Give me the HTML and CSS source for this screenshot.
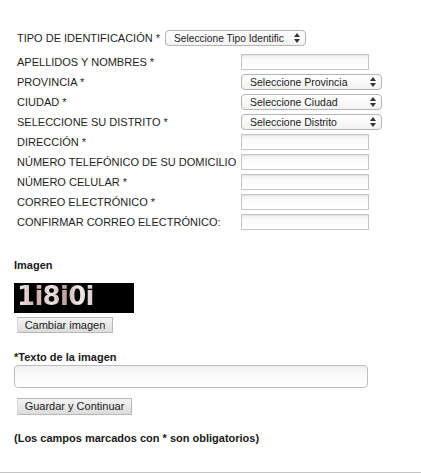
FILE: index.html
```html
<!DOCTYPE html>
<html lang="es">
<head>
<meta charset="utf-8">
<title>Formulario</title>
<link rel="stylesheet" href="styles.css">
</head>
<body>
<form class="page">
  <div class="fields">
    <div class="row row-first">
      <span class="label">TIPO DE IDENTIFICACIÓN *</span>
      <span class="select select-narrow"><span class="select-text">Seleccione Tipo Identific</span><svg class="arrows" width="6" height="10" viewBox="0 0 6 10"><path d="M0 4 L3 0 L6 4 Z M0 6 L3 10 L6 6 Z" fill="#333"/></svg></span>
    </div>
    <div class="row"><span class="label">APELLIDOS Y NOMBRES *</span><span class="input"></span></div>
    <div class="row"><span class="label">PROVINCIA *</span><span class="select"><span class="select-text">Seleccione Provincia</span><svg class="arrows" width="6" height="10" viewBox="0 0 6 10"><path d="M0 4 L3 0 L6 4 Z M0 6 L3 10 L6 6 Z" fill="#333"/></svg></span></div>
    <div class="row"><span class="label">CIUDAD *</span><span class="select"><span class="select-text">Seleccione Ciudad</span><svg class="arrows" width="6" height="10" viewBox="0 0 6 10"><path d="M0 4 L3 0 L6 4 Z M0 6 L3 10 L6 6 Z" fill="#333"/></svg></span></div>
    <div class="row"><span class="label">SELECCIONE SU DISTRITO *</span><span class="select"><span class="select-text">Seleccione Distrito</span><svg class="arrows" width="6" height="10" viewBox="0 0 6 10"><path d="M0 4 L3 0 L6 4 Z M0 6 L3 10 L6 6 Z" fill="#333"/></svg></span></div>
    <div class="row"><span class="label">DIRECCIÓN *</span><span class="input"></span></div>
    <div class="row"><span class="label">NÚMERO TELEFÓNICO DE SU DOMICILIO</span><span class="input"></span></div>
    <div class="row"><span class="label">NÚMERO CELULAR *</span><span class="input"></span></div>
    <div class="row"><span class="label">CORREO ELECTRÓNICO *</span><span class="input"></span></div>
    <div class="row"><span class="label">CONFIRMAR CORREO ELECTRÓNICO:</span><span class="input"></span></div>
  </div>

  <div class="lower">
    <div class="title title-imagen">Imagen</div>
    <div class="captcha"><span class="captcha-text">1i8i0i</span></div>
    <span class="btn btn-cambiar">Cambiar imagen</span>
    <div class="title title-texto">*Texto de la imagen</div>
    <div class="text-box"></div>
    <span class="btn btn-guardar">Guardar y Continuar</span>
    <div class="title note">(Los campos marcados con * son obligatorios)</div>
  </div>
  <div class="rule"></div>
</form>
</body>
</html>
```

FILE: styles.css
```css
html, body {
  margin: 0;
  padding: 0;
  background: #fff;
}

body {
  font-family: "Liberation Sans", Arial, Helvetica, sans-serif;
  font-size: 11px;
  color: #1e1e1e;
}

.page {
  display: flex;
  flex-direction: column;
  padding-top: 28px;
}

.fields {
  display: flex;
  flex-direction: column;
  padding-left: 17px;
}

.row {
  display: grid;
  grid-template-columns: 224px auto;
  align-items: center;
  height: 20px;
}

.row-first {
  display: flex;
  align-items: center;
  gap: 5px;
  margin-bottom: 4px;
}

.label {
  white-space: nowrap;
  line-height: 13px;
}

.input {
  display: block;
  box-sizing: border-box;
  width: 128px;
  height: 16px;
  border: 1px solid #c6c6c6;
  background: linear-gradient(#f1f1f1, #fbfbfb 40%, #fff);
  box-shadow: inset 0 1px 1px rgba(0, 0, 0, 0.06);
}

.select {
  position: relative;
  display: flex;
  align-items: center;
  box-sizing: border-box;
  width: 141px;
  height: 16px;
  border: 1px solid #b4b4b4;
  border-radius: 4px;
  background: linear-gradient(#ffffff, #f3f3f3);
  padding-left: 8px;
}

.select-narrow {
  padding-left: 8px;
}

.select-text {
  white-space: nowrap;
  font-size: 10.5px;
  line-height: 13px;
  color: #1a1a1a;
}

.select-narrow .select-text {
  font-size: 10.2px;
}

.arrows {
  position: absolute;
  right: 5px;
  top: 2px;
}

.lower {
  display: flex;
  flex-direction: column;
  align-items: flex-start;
  padding-left: 14px;
}

.title {
  font-weight: bold;
  line-height: 13px;
  color: #1a1a1a;
}

.title-imagen {
  margin-top: 27px;
}

.captcha {
  margin-top: 11px;
  width: 120px;
  height: 30px;
  background: #000;
  display: flex;
  align-items: center;
  padding-left: 3px;
  box-sizing: border-box;
}

.captcha-text {
  font-family: "DejaVu Sans", "Liberation Sans", sans-serif;
  font-weight: bold;
  font-size: 26px;
  line-height: 28px;
  letter-spacing: -0.7px;
  background: linear-gradient(90deg, #f4f0f0, #c8aaa6 25%, #efe6e4 45%, #bfa29e 62%, #f2ecea 80%, #d9cac8);
  -webkit-background-clip: text;
  background-clip: text;
  color: transparent;
  margin-top: -4px;
}

.btn {
  display: flex;
  align-items: center;
  justify-content: center;
  box-sizing: border-box;
  margin-left: 3px;
  border: 1px solid #b8b8b8;
  border-left-color: #d6d6d6;
  background: linear-gradient(#f4f4f4, #dcdcdc);
  color: #1a1a1a;
  line-height: 13px;
}

.btn-cambiar {
  margin-top: 4px;
  width: 96px;
  height: 16px;
}

.title-texto {
  margin-top: 18px;
}

.text-box {
  margin-top: 1px;
  box-sizing: border-box;
  width: 354px;
  height: 23px;
  border: 1px solid #bdbdbd;
  border-radius: 4px;
  background: linear-gradient(#f0f0f0, #fafafa 40%, #fff);
}

.btn-guardar {
  margin-top: 10px;
  width: 115px;
  height: 17px;
}

.note {
  margin-top: 17px;
}

.rule {
  margin-top: 27px;
  height: 0;
  border-top: 1px solid #c4c4c4;
}
```
